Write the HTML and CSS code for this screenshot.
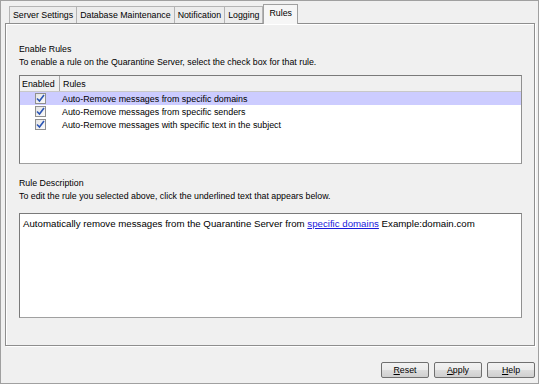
FILE: index.html
```html
<!DOCTYPE html>
<html lang="en">
<head>
    <meta charset="UTF-8">
    <title>Quarantine Server Rules</title>
    <link rel="stylesheet" href="styles.css">
</head>
<body>
    <div class="window">
        <div class="tabs">
            <div class="tab">Server Settings</div>
            <div class="tab">Database Maintenance</div>
            <div class="tab">Notification</div>
            <div class="tab">Logging</div>
            <div class="tab active">Rules</div>
        </div>

        <div class="tab-panel">
            <div class="section-title">Enable Rules</div>
            <div class="section-hint">To enable a rule on the Quarantine Server, select the check box for that rule.</div>

            <div class="rules-table">
                <div class="table-row table-head">
                    <div class="col-enabled">Enabled</div>
                    <div class="col-rule">Rules</div>
                </div>
                <div class="table-row selected">
                    <div class="col-enabled"><span class="check"><svg width="9" height="9" viewBox="0 0 9 9"><path d="M1 4.5 L3.5 7 L8 1" fill="none" stroke="#2b55b5" stroke-width="1.6"/></svg></span></div>
                    <div class="col-rule">Auto-Remove messages from specific domains</div>
                </div>
                <div class="table-row">
                    <div class="col-enabled"><span class="check"><svg width="9" height="9" viewBox="0 0 9 9"><path d="M1 4.5 L3.5 7 L8 1" fill="none" stroke="#2b55b5" stroke-width="1.6"/></svg></span></div>
                    <div class="col-rule">Auto-Remove messages from specific senders</div>
                </div>
                <div class="table-row">
                    <div class="col-enabled"><span class="check"><svg width="9" height="9" viewBox="0 0 9 9"><path d="M1 4.5 L3.5 7 L8 1" fill="none" stroke="#2b55b5" stroke-width="1.6"/></svg></span></div>
                    <div class="col-rule">Auto-Remove messages with specific text in the subject</div>
                </div>
            </div>

            <div class="section-title second">Rule Description</div>
            <div class="section-hint">To edit the rule you selected above, click the underlined text that appears below.</div>

            <div class="description-box">
                Automatically remove messages from the Quarantine Server from <a href="#">specific domains</a> Example:domain.com
            </div>
        </div>

        <div class="button-bar">
            <button><u>R</u>eset</button>
            <button><u>A</u>pply</button>
            <button class="help"><u>H</u>elp</button>
        </div>
    </div>
</body>
</html>
```

FILE: styles.css
```css
:root {
    --bg: #f0f0f0;
    --frame: #a0a0a0;
    --text: #000000;
    --selected: #ccccff;
    --link: #1a1adb;
}

* {
    margin: 0;
    padding: 0;
    box-sizing: border-box;
    font-family: "Liberation Sans", Arial, sans-serif;
}

body {
    width: 539px;
    height: 384px;
    background: var(--bg);
    color: var(--text);
}

.window {
    height: 384px;
    border: 1px solid var(--frame);
    background: var(--bg);
    display: flex;
    flex-direction: column;
}

/* tab strip */
.tabs {
    display: flex;
    align-items: flex-end;
    height: 21px;
    padding-left: 8px;
    margin-top: 1px;
}

.tab {
    height: 17px;
    padding: 0 3px;
    border: 1px solid #b4b4b4;
    border-bottom: none;
    margin-right: -1px;
    font-size: 8.8px;
    line-height: 16px;
    background: #ececec;
}

.active {
    height: 20px;
    padding: 0 5px;
    margin-left: 1px;
    margin-bottom: -1px;
    background: #f6f6f6;
    border-color: #a0a0a0;
    line-height: 16px;
    position: relative;
    z-index: 1;
}

.tab-panel {
    height: 323px;
    margin: 0 3px 0 4px;
    border: 1px solid #8e8e8e;
    box-shadow: inset 1px 1px 0 #ffffff, 1px 1px 0 #ffffff;
    padding: 19px 12px 0 13px;
    display: flex;
    flex-direction: column;
}

.section-title {
    font-size: 8.8px;
    line-height: 13px;
}

.section-title.second {
    margin-top: 13px;
}

.section-hint {
    font-size: 8.8px;
    line-height: 13px;
}

/* rules list */
.rules-table {
    margin-top: 6px;
    height: 89px;
    background: #ffffff;
    border: 1px solid #7a7a7a;
    border-right-color: #909090;
    border-bottom-color: #a0a0a0;
    font-size: 8.9px;
}

.table-row {
    display: flex;
    height: 13px;
    align-items: center;
}

.table-head {
    height: 16px;
    background: #f0f0f0;
    border-bottom: 1px solid #c8c8c8;
}

.table-head .col-enabled {
    border-right: 1px solid #a8a8a8;
    justify-content: flex-start;
    padding-left: 2px;
}

.selected {
    background: var(--selected);
}

.col-enabled {
    width: 40px;
    height: 100%;
    display: flex;
    align-items: center;
    justify-content: center;
}

.col-rule {
    padding-left: 2px;
    flex: 1;
}

.table-head .col-rule {
    padding-left: 3px;
}

.check {
    width: 11px;
    height: 11px;
    border: 1px solid #8f8f8f;
    background: linear-gradient(135deg, #e4e4e4, #fbfbfb);
    display: flex;
    align-items: center;
    justify-content: center;
}

.description-box {
    margin-top: 10px;
    height: 105px;
    background: #ffffff;
    border: 1px solid #7a7a7a;
    border-right-color: #909090;
    border-bottom-color: #a0a0a0;
    padding: 3px 3px;
    font-size: 9.7px;
    line-height: 13px;
}

.description-box a {
    color: var(--link);
}

/* bottom buttons */
.button-bar {
    display: flex;
    justify-content: flex-end;
    gap: 5px;
    padding: 16px 3px 0 0;
}

button {
    width: 48px;
    height: 16px;
    border: 1px solid #707070;
    border-radius: 2px;
    background: linear-gradient(#f2f2f2, #ebebeb 50%, #dddddd 51%, #cfcfcf);
    font-size: 8.8px;
    color: var(--text);
}
```
